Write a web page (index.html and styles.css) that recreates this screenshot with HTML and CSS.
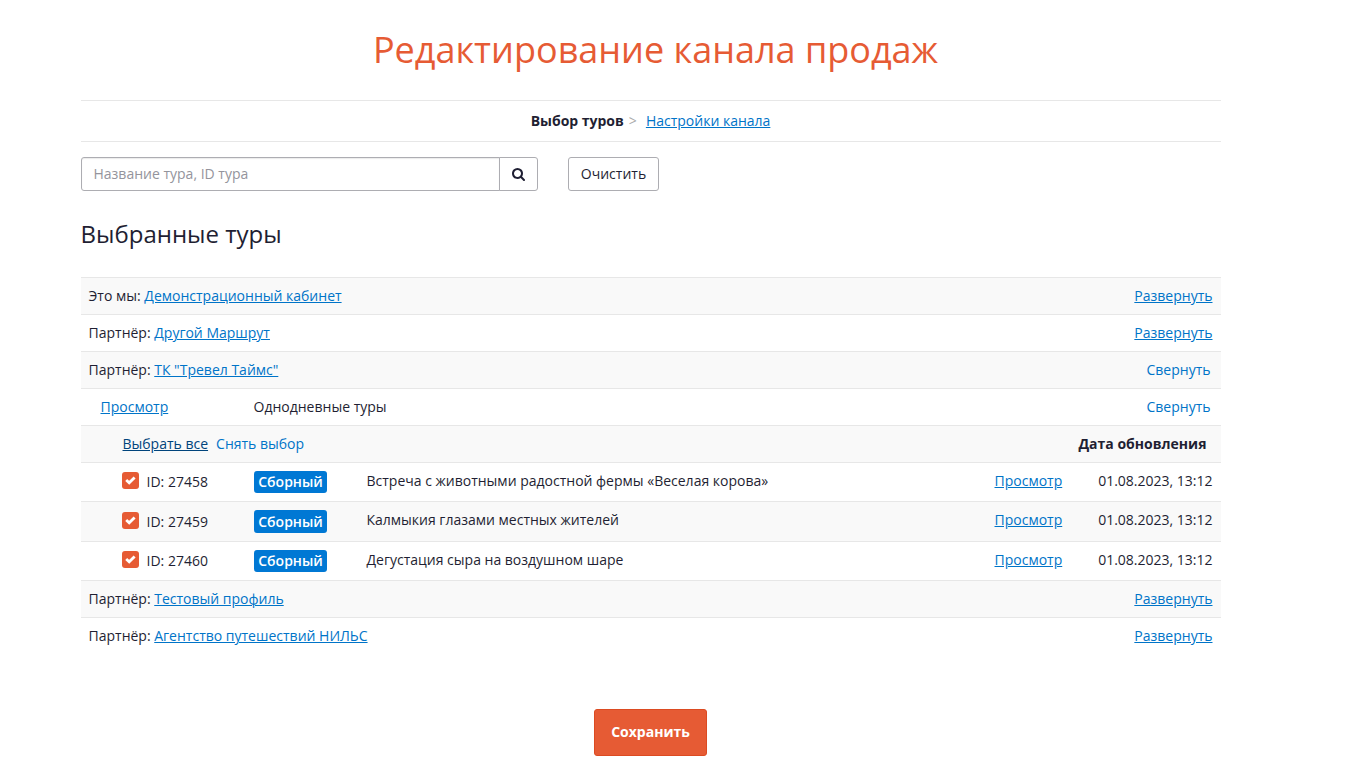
FILE: index.html
```html
<!DOCTYPE html>
<html lang="ru">
<head>
<meta charset="utf-8">
<title>Редактирование канала продаж</title>
<link rel="stylesheet" href="styles.css">
</head>
<body>
<main class="page">
  <h1 class="title">Редактирование канала продаж</h1>
  <nav class="steps"><b>Выбор туров</b><span class="sep">&gt;</span><a href="#">Настройки канала</a></nav>
  <form class="search">
    <input class="field" type="text" placeholder="Название тура, ID тура">
    <button class="find" type="button"><svg width="13" height="13" viewBox="0 0 1664 1664"><path fill="#1f1f33" d="M1152 704q0-185-131.500-316.500T704 256 387.500 387.500 256 704t131.500 316.500T704 1152t316.500-131.500T1152 704zm512 832q0 52-38 90t-90 38q-54 0-90-38l-343-342q-179 124-399 124-143 0-273.500-55.500t-225-150-150-225T0 704t55.500-273.500 150-225 225-150T704 0t273.500 55.500 225 150 150 225T1408 704q0 220-124 399l343 343q37 37 37 90z"/></svg></button>
    <button class="clear" type="button">Очистить</button>
  </form>
  <h2 class="subtitle">Выбранные туры</h2>
  <section class="list">
    <div class="row odd"><span>Это мы: <a href="#">Демонстрационный кабинет</a></span><a class="end" href="#">Развернуть</a></div>
    <div class="row"><span>Партнёр: <a href="#">Другой Маршрут</a></span><a class="end" href="#">Развернуть</a></div>
    <div class="row odd"><span>Партнёр: <a href="#">ТК "Тревел Таймс"</a></span><a class="end fold" href="#">Свернуть</a></div>
    <div class="row group"><a href="#">Просмотр</a><span>Однодневные туры</span><a class="end fold" href="#">Свернуть</a></div>
    <div class="row odd pick"><a class="all" href="#">Выбрать все</a><a class="none" href="#">Снять выбор</a><b class="end date-head">Дата обновления</b></div>
    <div class="row tour"><span class="id"><i class="check"><svg width="11" height="9" viewBox="0 0 11 9"><path d="M1.200 4 4.200 6.800 9.600 1.400" fill="none" stroke="#fff" stroke-width="2.800"/></svg></i>ID: 27458</span><span><em class="tag">Сборный</em></span><span>Встреча с животными радостной фермы «Веселая корова»</span><a href="#">Просмотр</a><span class="date">01.08.2023, 13:12</span></div>
    <div class="row tour odd tall"><span class="id"><i class="check"><svg width="11" height="9" viewBox="0 0 11 9"><path d="M1.200 4 4.200 6.800 9.600 1.400" fill="none" stroke="#fff" stroke-width="2.800"/></svg></i>ID: 27459</span><span><em class="tag">Сборный</em></span><span>Калмыкия глазами местных жителей</span><a href="#">Просмотр</a><span class="date">01.08.2023, 13:12</span></div>
    <div class="row tour"><span class="id"><i class="check"><svg width="11" height="9" viewBox="0 0 11 9"><path d="M1.200 4 4.200 6.800 9.600 1.400" fill="none" stroke="#fff" stroke-width="2.800"/></svg></i>ID: 27460</span><span><em class="tag">Сборный</em></span><span>Дегустация сыра на воздушном шаре</span><a href="#">Просмотр</a><span class="date">01.08.2023, 13:12</span></div>
    <div class="row odd"><span>Партнёр: <a href="#">Тестовый профиль</a></span><a class="end" href="#">Развернуть</a></div>
    <div class="row"><span>Партнёр: <a href="#">Агентство путешествий НИЛЬС</a></span><a class="end" href="#">Развернуть</a></div>
  </section>
  <button class="save" type="button">Сохранить</button>
</main>
</body>
</html>
```
FILE: styles.css
```css
* { box-sizing: border-box; }
body { margin: 0; background: #fff; color: #1f1f33; font: 14px/20px "Open Sans", sans-serif; overflow: hidden; }
a { color: #0074c8; text-decoration: underline; }
b { font-weight: 700; }
.page { width: 1140px; margin-left: 80.5px; display: flex; flex-direction: column; }
.title { margin: 25px 0 0 10px; height: 75px; font-size: 36px; line-height: 50px; font-weight: 400; color: #e65b34; text-align: center; }
.steps { height: 42px; border-top: 1px solid #e7e7e7; border-bottom: 1px solid #e7e7e7; display: flex; justify-content: center; line-height: 40px; }
.sep { color: #aaa; margin: 0 9px 0 5px; }
.search { display: flex; height: 34px; margin-top: 15px; }
.field { width: 419px; border: 1px solid #adadb2; border-radius: 3px 0 0 3px; padding: 0 12px; font: inherit; box-shadow: inset 0 1px 1px rgba(0,0,0,.08); }
.field::placeholder { color: #94949c; opacity: 1; }
.find { width: 39px; margin-left: -1px; border: 1px solid #adadb2; border-radius: 0 3px 3px 0; background: #fff; padding: 0; display: flex; align-items: center; justify-content: center; }
.clear { width: 91px; margin-left: 30px; border: 1px solid #adadb2; border-radius: 3px; background: #fff; font: inherit; color: inherit; padding: 0 0 0 1px; }
.subtitle { margin: 26px 0 0; height: 60px; font-size: 24px; line-height: 33px; font-weight: 400; }
.row { height: 37px; border-top: 1px solid #e7e7e7; display: flex; padding: 8px 8px 0; }
.odd { background: #f9f9f9; }
.end { margin-left: auto; }
.fold, .none { text-decoration: none; }
.fold { margin-right: 2px; }
.group { padding-left: 20px; }
.group > :first-child { width: 153px; }
.pick { padding-left: 42px; }
.all { color: #00447c; margin-right: 8px; }
.date-head { margin-right: 6px; }
.tour { display: grid; grid-template-columns: 132px 113px 628px 89px 1fr; padding-left: 41px; height: 39px; }
.tall { height: 40px; }
.id { display: flex; padding-top: 1px; }
.tall .id { padding-top: 2px; }
.check { width: 17px; height: 17px; border-radius: 3px; background: #e65b34; margin-right: 8px; display: flex; align-items: center; justify-content: center; }
.tag { display: block; width: 73px; height: 22px; padding-left: 1px; border-radius: 3px; background: #0078d4; color: #fff; font-style: normal; font-weight: 600; text-align: center; line-height: 21px; }
.tall .tag { height: 23px; line-height: 23px; }
.date { text-align: right; }
.save { width: 113px; height: 47px; margin: 55px auto 0 513px; border: 1px solid #dc4b22; border-radius: 3px; background: #e65b34; color: #fff; font: 700 14px/20px "Open Sans", sans-serif; padding: 0 0 2px 1px; }
```
